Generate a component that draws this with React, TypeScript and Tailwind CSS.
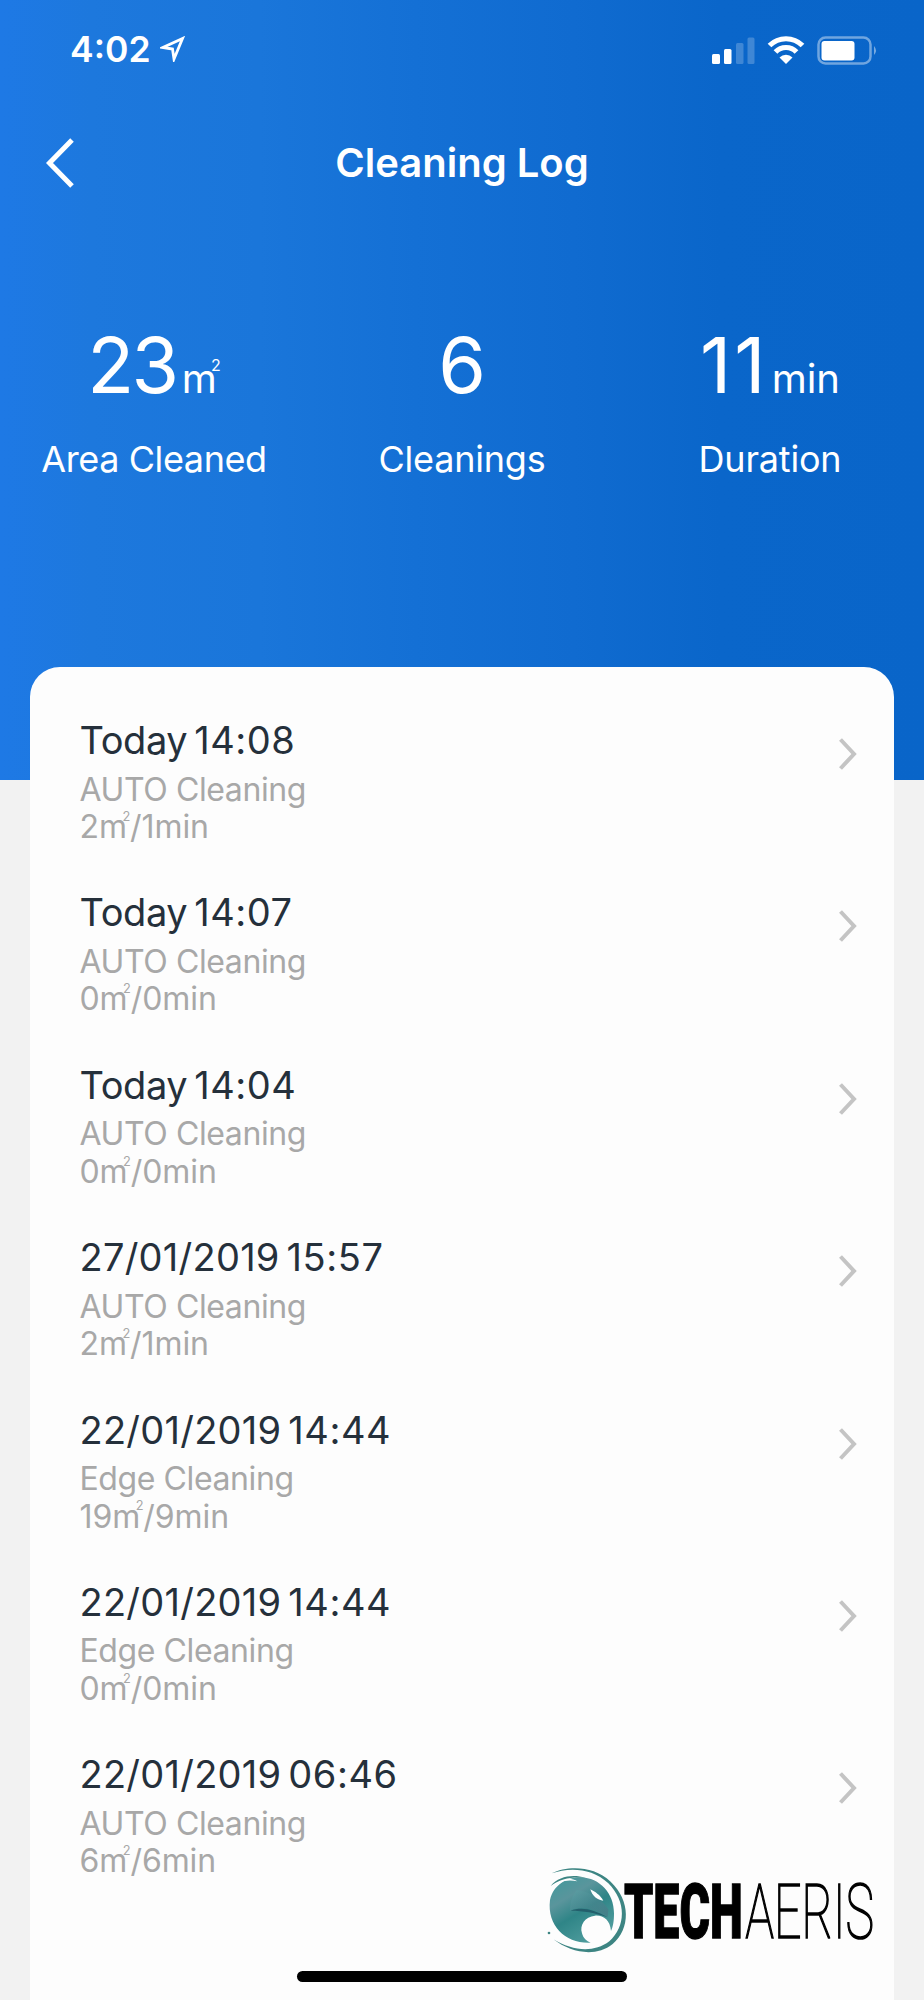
import { clsx } from 'clsx';

interface LogEntry {
  day: string;
  clock: string;
  mode: string;
  area: number;
  minutes: number;
}

const entries: LogEntry[] = [
  { day: 'Today', clock: '14:08', mode: 'AUTO Cleaning', area: 2, minutes: 1 },
  { day: 'Today', clock: '14:07', mode: 'AUTO Cleaning', area: 0, minutes: 0 },
  { day: 'Today', clock: '14:04', mode: 'AUTO Cleaning', area: 0, minutes: 0 },
  { day: '27/01/2019', clock: '15:57', mode: 'AUTO Cleaning', area: 2, minutes: 1 },
  { day: '22/01/2019', clock: '14:44', mode: 'Edge Cleaning', area: 19, minutes: 9 },
  { day: '22/01/2019', clock: '14:44', mode: 'Edge Cleaning', area: 0, minutes: 0 },
  { day: '22/01/2019', clock: '06:46', mode: 'AUTO Cleaning', area: 6, minutes: 6 },
];

function StatusBar() {
  return (
    <div className="flex h-[98px] items-center justify-between pl-[70px] pr-[46px]">
      <div className="flex items-center gap-[9px]">
        <span className="mt-[2px] text-[35.5px] font-semibold leading-none">4:02</span>
        <svg width="26" height="26" viewBox="0 0 26 26" fill="none" stroke="white" strokeWidth="2.8" strokeLinejoin="miter">
          <path d="M22.500 2.500 L3 11.500 L12.500 13 L14 23 Z" />
        </svg>
      </div>
      <svg width="168" height="32" viewBox="0 0 168 32">
        {/* signal */}
        <g fill="white">
          <rect x="2" y="21" width="8" height="10" rx="1.500" />
          <rect x="14" y="16" width="7.500" height="15" rx="1.500" />
          <rect x="26" y="10" width="7.500" height="21" rx="1.500" opacity="0.22" />
          <rect x="37.500" y="4.500" width="7" height="26.500" rx="1.500" opacity="0.22" />
        </g>
        {/* wifi */}
        <g fill="none" stroke="white" strokeWidth="5.200">
          <path d="M59.500 12.500 A23.500 23.500 0 0 1 92.500 12.500" />
          <path d="M65.500 19 A14.500 14.500 0 0 1 86.500 19" />
        </g>
        <path d="M76 31 L69.500 24.500 A9.200 9.200 0 0 1 82.500 24.500 Z" fill="white" />
        {/* battery */}
        <rect x="108.500" y="4.500" width="52" height="26" rx="7" fill="none" stroke="white" strokeOpacity="0.42" strokeWidth="2.500" />
        <rect x="111.500" y="8" width="33" height="19.500" rx="3" fill="white" />
        <path d="M164 13 Q168 17.500 164 22 Z" fill="white" opacity="0.45" />
      </svg>
    </div>
  );
}

function SquareMetre() {
  return (
    <>
      m<span className="-ml-[0.350em] align-[1.350em] text-[0.400em] leading-none">2</span>
    </>
  );
}

function Stat({ children, label, tight }: { children: React.ReactNode; label: string; tight?: boolean }) {
  return (
    <div className="flex flex-col items-center whitespace-nowrap">
      <div className="h-[94px] text-[77px] leading-[94px]">{children}</div>
      <div className={clsx('mt-[25px] text-[36px] leading-[44px]', tight ? 'tracking-[-0.400px]' : 'tracking-[-0.200px]')}>
        {label}
      </div>
    </div>
  );
}

function LogRow({ entry }: { entry: LogEntry }) {
  return (
    <li className="flex h-[172.400px] justify-between pl-[49.500px] pr-[37.500px]">
      <div className="whitespace-nowrap">
        <div className="h-[46px] text-[38px] leading-[46px] tracking-[0.250px] text-[#25303b] [word-spacing:-4px]">
          <span className={entry.day === 'Today' ? 'tracking-[-0.400px]' : ''}>{entry.day}</span>{' '}
          <span className="tracking-[0.550px]">{entry.clock}</span>
        </div>
        <div className="mt-[7.500px] h-[37.500px] text-[32px] leading-[37px] tracking-[-0.400px] text-[#a8a8a8]">{entry.mode}</div>
        <div className="h-[37px] text-[32px] leading-[37px] tracking-[-0.100px] text-[#a8a8a8]">
          {entry.area}
          <SquareMetre />/{entry.minutes}min
        </div>
      </div>
      <svg className="mt-[21px]" width="18" height="32" viewBox="0 0 18 32" fill="none" stroke="#c4c4c4" strokeWidth="4">
        <path d="M1.500 1.500 L15 16 L1.500 30.500" />
      </svg>
    </li>
  );
}

function TechaerisLogo() {
  return (
    <svg className="absolute left-[540px] top-[1860px] overflow-visible" width="350" height="100" viewBox="0 0 1050 300">
      <defs>
        <linearGradient id="disc" x1="0" y1="0" x2="0.6" y2="1">
          <stop offset="0" stopColor="#3f9a9c" />
          <stop offset="0.35" stopColor="#5a959c" />
          <stop offset="0.6" stopColor="#2f8587" />
          <stop offset="1" stopColor="#4f9c9d" />
        </linearGradient>
        <linearGradient id="beak" x1="0" y1="0" x2="1" y2="1">
          <stop offset="0" stopColor="#59a3a6" />
          <stop offset="1" stopColor="#4a6f80" />
        </linearGradient>
      </defs>
      {/* outer swoosh */}
      <path d="M35 40 C80 18 160 15 212 65 C272 122 272 205 218 252 C168 292 95 280 40 238 C98 273 160 280 208 244 C258 200 260 125 205 70 C155 22 85 22 35 40 Z" fill="#3d8583" />
      <circle cx="27" cy="219" r="4" fill="#3d8583" />
      {/* disc and head */}
      <path d="M30 120 C40 75 80 52 122 52 C180 54 222 100 222 160 C222 185 219 200 213 213 C210 180 190 165 165 167 C135 170 118 195 126 220 C130 235 140 244 152 248 C80 252 20 200 30 120 Z" fill="url(#disc)" />
      <path d="M90 152 C120 138 160 145 203 170 L205 148 C185 115 150 95 110 90 C95 110 90 130 90 152 Z" fill="url(#beak)" opacity="0.55" />
      <path d="M92 152 C125 140 160 148 203 172 C165 158 130 152 92 152 Z" fill="#245f6c" />
      <path d="M33 80 C60 52 95 52 112 64 C80 58 55 65 33 80 Z" fill="white" />
      <path d="M32 78 C55 48 100 42 135 53 C95 50 58 56 32 78 Z" fill="#3d8583" />
      <path d="M151 88 C165 95 180 105 190 122 C172 120 156 108 151 88 Z" fill="white" />
      <g className="font-['Roboto',sans-serif]" fill="black" stroke="black">
        <text x="252" y="235" fontSize="230" fontWeight="900" strokeWidth="4" textLength="356" lengthAdjust="spacingAndGlyphs">TECH</text>
        <text x="616" y="235" fontSize="230" fontWeight="100" strokeWidth="5" textLength="386" lengthAdjust="spacingAndGlyphs">AERIS</text>
      </g>
    </svg>
  );
}

export default function App() {
  return (
    <div className="relative h-[2000px] w-[924px] overflow-hidden bg-[#f2f2f2] font-['Inter','Noto_Sans_CJK_SC',sans-serif]">
      <header className="h-[780px] bg-[linear-gradient(90deg,#1e79e5_0%,#1d78dd_10%,#1a76da_28%,#1470d5_45%,#106bd0_62%,#0a66ca_78%,#0965c9_100%)] text-white">
        <StatusBar />
        <div className="grid h-[130px] grid-cols-[100px_1fr_100px] items-center">
          <svg className="-mt-px ml-[45px]" width="30" height="50" viewBox="0 0 30 50" fill="none" stroke="white" strokeWidth="5">
            <path d="M27 2 L4.500 25 L27 48" />
          </svg>
          <h1 className="text-center text-[40px] font-semibold">Cleaning Log</h1>
        </div>
        <div className="mt-[90px] grid grid-cols-3">
          <Stat label="Area Cleaned" tight>
            <span className="tracking-[-2.500px]">23</span>
            <span className="ml-[5px] text-[40px]">
              <SquareMetre />
            </span>
          </Stat>
          <Stat label="Cleanings">6</Stat>
          <Stat label="Duration">
            <span className="tracking-[3px]">11</span>
            <span className="ml-[3px] text-[40px]">min</span>
          </Stat>
        </div>
      </header>
      <ul className="relative mx-[30px] -mt-[113px] h-[1333px] rounded-t-[30px] bg-[#fdfdfd] pt-[50px]">
        {entries.map((entry, i) => (
          <LogRow key={i} entry={entry} />
        ))}
      </ul>
      <TechaerisLogo />
      <div className="absolute bottom-[18px] left-[297px] h-[11px] w-[330px] rounded-full bg-black" />
    </div>
  );
}
